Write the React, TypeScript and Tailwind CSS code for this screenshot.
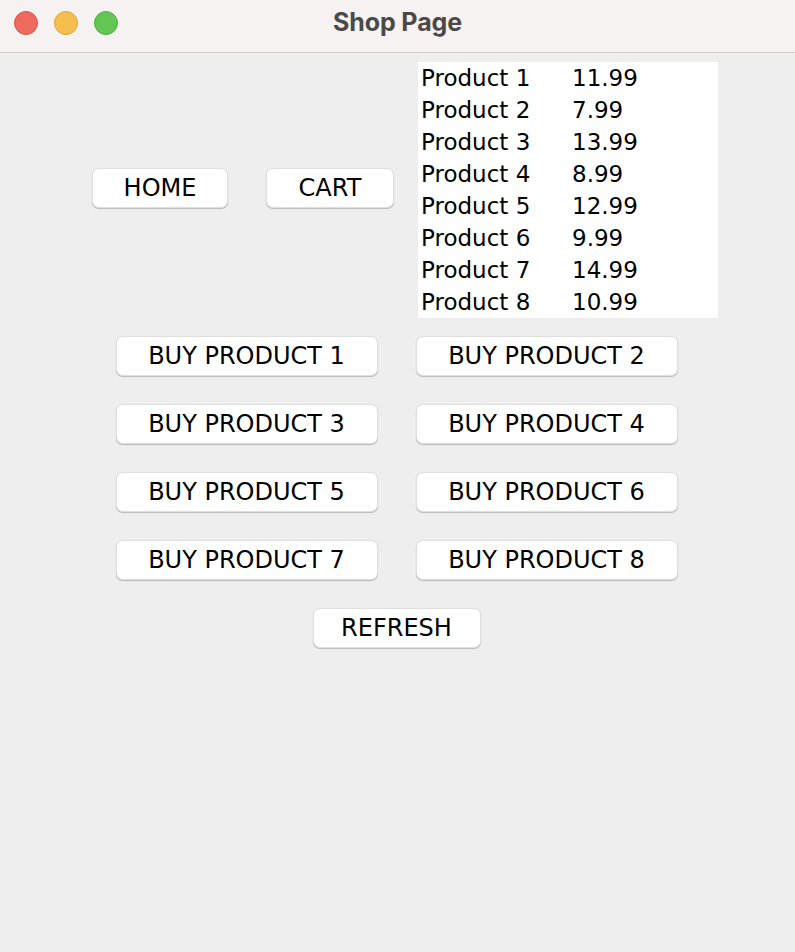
import React from "react";

const products: [string, string][] = [
  ["Product 1", "11.99"],
  ["Product 2", "7.99"],
  ["Product 3", "13.99"],
  ["Product 4", "8.99"],
  ["Product 5", "12.99"],
  ["Product 6", "9.99"],
  ["Product 7", "14.99"],
  ["Product 8", "10.99"],
];

function Btn({ label, w }: { label: string; w: string }) {
  return (
    <button
      className={`${w} h-[40px] rounded-[7px] bg-white border border-[#dedede] shadow-[0_1px_1px_rgba(0,0,0,0.22)] text-[24px] leading-none text-black flex items-center justify-center`}
    >
      {label}
    </button>
  );
}

export default function App() {
  return (
    <div className="w-[795px] h-[952px] bg-[#eeeeee] flex flex-col font-['DejaVu_Sans',sans-serif] overflow-hidden">
      <div className="h-[53px] bg-[#f7f2f2] border-b border-[#cfcbcb] flex items-center relative shrink-0">
        <div className="flex gap-[16px] pl-[14px] mb-[7px]">
          <span className="w-[24px] h-[24px] rounded-full bg-[#ee6a5f] border border-[#d5564c]" />
          <span className="w-[24px] h-[24px] rounded-full bg-[#f6be4f] border border-[#dca33c]" />
          <span className="w-[24px] h-[24px] rounded-full bg-[#62c655] border border-[#4fae43]" />
        </div>
        <div className="absolute inset-0 flex items-center justify-center pb-[7px] font-['Inter',sans-serif] font-bold text-[25px] text-[#4b4848] tracking-[-0.1px]">
          Shop Page
        </div>
      </div>

      <div className="flex items-center pt-[9px] pl-[92px]">
        <div className="mb-[4px]">
          <Btn label="HOME" w="w-[136px]" />
        </div>
        <div className="ml-[38px] mb-[4px]">
          <Btn label="CART" w="w-[128px]" />
        </div>
        <div className="ml-[24px] w-[300px] h-[256px] bg-white pl-[3px] text-[23px] text-black">
          {products.map(([n, p]) => (
            <div key={n} className="h-[32px] flex items-center">
              <span className="w-[151px]">{n}</span>
              <span>{p}</span>
            </div>
          ))}
        </div>
      </div>

      <div className="flex flex-col items-center gap-[28px] mt-[18px] pr-[2px]">
        {[1, 3, 5, 7].map((i) => (
          <div key={i} className="flex gap-[38px]">
            <Btn label={`BUY PRODUCT ${i}`} w="w-[262px]" />
            <Btn label={`BUY PRODUCT ${i + 1}`} w="w-[262px]" />
          </div>
        ))}
        <Btn label="REFRESH" w="w-[168px]" />
      </div>
    </div>
  );
}
